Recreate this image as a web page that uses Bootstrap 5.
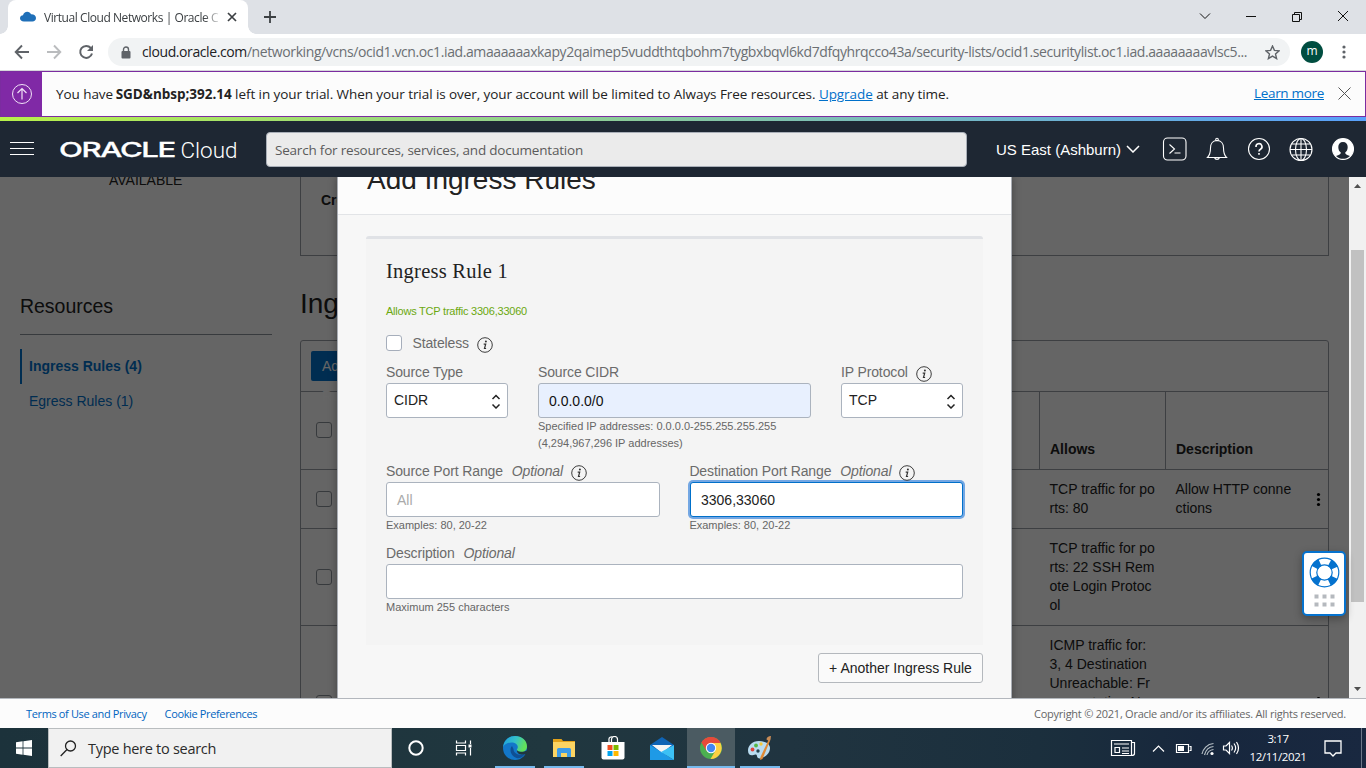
<!DOCTYPE html>
<html lang="en">
<head>
<meta charset="utf-8">
<meta name="viewport" content="width=device-width, initial-scale=1">
<title>Virtual Cloud Networks | Oracle Cloud</title>
<link href="https://cdn.jsdelivr.net/npm/bootstrap@5.3.0/dist/css/bootstrap.min.css" rel="stylesheet">
<style>
  html, body { height: 768px; overflow: hidden; }
  body { width: 1366px; font-family: "Liberation Sans", Arial, sans-serif; font-size: 14px; line-height: 19px; color: #222; background: #fff; }
  svg { display: block; flex: none; }
  .segoe { font-family: "Open Sans", "Noto Sans", sans-serif; }
  .fit { white-space: nowrap; display: inline-block; }

  /* browser chrome */
  .tabstrip { height: 34px; background: #dee1e6; padding-left: 8px; }
  .browser-tab { position: relative; width: 240px; height: 34px; background: #fff; border-radius: 8px 8px 0 0; padding-left: 12px; font-size: 12px; color: #3c4043; }
  .browser-tab::before, .browser-tab::after { content: ""; position: absolute; bottom: 0; width: 8px; height: 8px; }
  .browser-tab::before { left: -8px; background: radial-gradient(circle at 0 0, transparent 7.5px, #fff 8px); }
  .browser-tab::after { right: -8px; background: radial-gradient(circle at 100% 0, transparent 7.5px, #fff 8px); }
  .tab-title { width: 175px; overflow: hidden; letter-spacing: -.44px; -webkit-mask-image: linear-gradient(90deg, #000 160px, transparent 178px); mask-image: linear-gradient(90deg, #000 160px, transparent 178px); }
  .toolbar { height: 37px; border-bottom: 1px solid #d5d7da; padding-left: 14px; }
  .omnibox { width: 1182px; height: 28px; border-radius: 14px; background: #f1f3f4; padding: 0 10px 0 13px; color: #6b6f73; font-size: 14px; }
  .omnibox b { font-weight: 400; color: #202124; }
  .url { letter-spacing: -.401px; margin-left: 11px; line-height: 18px; padding-bottom: 1px; }
  .avatar { width: 22px; height: 22px; border-radius: 50%; background: #004d40; color: #fff; font-size: 12px; line-height: 20px; margin-left: 11px; }
  .dots { margin-left: 18px; }

  /* trial banner */
  .trial { height: 46px; border: 1px solid #7b2ca0; background: #fcfcfc; font-size: 13.5px; color: #222; }
  .trial-mark { width: 41px; background: #8029a6; }
  .trial a { color: #0070ca; }
  .trial-text { margin-left: 14px; letter-spacing: -.071px; }
  .trial-text b { letter-spacing: -.02px; margin-left: -.8px; }
  .learn { letter-spacing: -.31px; padding-bottom: 1px; }
  .close-x { margin: 0 14px 2px; }
  .rainbow { height: 4px; background: linear-gradient(90deg, #b7f04a, #58a0fb); }
  .cloud-nav { height: 56px; background: #1e2733; color: #fff; }
  .search-box { width: 701px; height: 35px; margin-left: 29px; padding-left: 8px; border: 1px solid #a9afb8; border-radius: 4px; background: #ebebeb; color: #5b5b5b; font-size: 13.5px; line-height: 34px; letter-spacing: -.204px; }
  .region { margin-left: 29px; width: 144px; font-size: 15px; }
  .tools { margin: 0 6px 0 auto; }

  /* page below the dialog */
  .stage { position: relative; height: 521px; overflow: hidden; }
  .page { width: 1349px; height: 521px; overflow: hidden; background: #fcfcfc; padding-left: 20px; }
  .side { width: 252px; }
  .status { height: 122px; padding-left: 89px; line-height: 6px; }
  .side-title { font-size: 19.5px; line-height: 14px; height: 36px; border-bottom: 1px solid #8b9198; letter-spacing: -.03px; }
  .side-link { height: 35px; padding-left: 7px; line-height: 35px; color: #0070ca; border-left: 2px solid transparent; }
  .side-link.current { margin-top: 14px; line-height: 34px; border-color: #0070ca; font-weight: 700; }
  .content-col { width: 1029px; margin-left: 28px; }
  .info-box { height: 79px; border: 1px solid #9a9fa6; border-top: 0; padding: 14px 0 0 20px; font-weight: 700; }
  .content-title { font-size: 28px; line-height: 34px; margin: 31px 0 19px; }
  .rules { border: 1px solid #9a9fa6; border-radius: 3px 3px 0 0; height: 420px; }
  .rules-bar { height: 50px; padding: 10px; }
  .rules-bar .btn { display: block; height: 30px; width: 130px; text-align: left; padding: 0 11px; font-size: 14px; line-height: 30px; border-radius: 2px; background: #0070ca; border: 0; color: #fff; }
  .rule-row { display: grid; grid-template-columns: 738px 126px 143px 20px; border-top: 1px solid #9a9fa6; }
  .rule-row > div { padding: 10px 9px 10px 10.5px; word-break: break-all; }
  .rule-row > div:first-child { padding-left: 15px; display: flex; align-items: center; }
  .rule-row > div:last-child { padding: 0 0 0 8px; display: flex; align-items: center; }
  .rule-head { height: 78px; font-weight: 700; }
  .rule-head > div:nth-child(1) { padding-bottom: 12px; }
  .rule-head > div:nth-child(2), .rule-head > div:nth-child(3) { border-left: 1px solid #9a9fa6; padding-top: 48px; padding-left: 10px; }
  .r1 { height: 59px; } .r2 { height: 97px; } .r3 { height: 155px; }
  .tick { width: 16px; height: 16px; border: 1px solid #8b9198; border-radius: 3px; display: block; flex: none; }
  .form-area .tick { background: #fff; border-color: #a6aebb; }
  .shade { position: absolute; top: 0; left: 0; width: 1349px; height: 521px; background: rgba(0,0,0,.6); }
  .dialog { width: 675px; height: 560px; background: #f7f7f7; border: solid #a9adb4; border-width: 0 1px; box-shadow: 0 0 8px rgba(0,0,0,.35); }
  .dialog-head { height: 38px; background: #fcfcfc; border-bottom: 1px solid #e2e4e7; padding-left: 29px; font-size: 28px; line-height: 6px; }
  .form-area { margin: 21px 28px 8px; height: 409px; background: #f4f4f4; border-top: 3px solid #e0e2e6; border-radius: 3px 3px 0 0; padding: 20px 20px 0; color: #6b6b6b; }
  .rule-name { font-family: "Liberation Serif", "Times New Roman", serif; font-size: 20.5px; line-height: 25px; color: #222; height: 42px; letter-spacing: .25px; }
  .allows { color: #6ba80f; font-size: 11px; line-height: 20px; height: 33px; letter-spacing: -.22px; }
  .lbl { height: 20px; line-height: 18px; display: flex; white-space: nowrap; letter-spacing: -.13px; }
  .lbl svg { margin: 3px 0 0 8px; }
  .lbl i { margin-left: 9px; }
  .stateless .tick { margin-top: 1px; }
  .stateless .fit { margin-left: 10.5px; }
  .cols-a { display: grid; grid-template-columns: 122px 273px 122px; column-gap: 30px; height: 99px; margin-top: 9px; }
  .cols-b { display: grid; grid-template-columns: 274px 274px; column-gap: 29.4px; height: 82px; }
  .box { height: 35px; border: 1px solid #abb3be; border-radius: 3px; background: #fff; color: #222; padding: 0 10px; line-height: 34px; font-size: 14px; }
  .box.pick { padding: 0 6px 0 7px; line-height: 33px; display: flex; justify-content: space-between; align-items: center; }
  .box.pick svg { margin-top: 2px; }
  .box.filled { background: #e8f0fe; color: #111; }
  .box.active { border-color: #0070ca; box-shadow: 0 0 0 2px #74a7e3; margin: 0 0 0 .6px; }
  .box.hint { color: #aaa; }
  .help { font-size: 11px; line-height: 17px; color: #666; }
  .add-btn { width: 165px; height: 30px; border: 1px solid #b4b8bd; border-radius: 3px; background: #fafafa; line-height: 28px; margin-right: 28px; padding: 0; font-size: 14px; color: #222; text-align: center; }
  .scrollrail { position: absolute; top: 0; right: 0; width: 17px; height: 521px; background: #f1f1f1; padding: 73px 2px 0; }
  .thumb { width: 13px; height: 352px; background: #c1c1c1; }
  .scrollrail svg { position: absolute; left: 0; }
  .lifebuoy { position: absolute; left: 1302px; top: 374px; width: 44px; height: 65px; border: 2px solid #0572ce; border-radius: 5px; background: #fff; box-shadow: 0 3px 8px rgba(0,0,0,.3); padding: 4px 0 0 4.5px; }

  .legal { height: 30px; border-top: 1px solid #b3b7bd; background: #fcfcfc; padding: 0 20px 0 26px; font-size: 11px; color: #666; letter-spacing: -.241px; }
  .legal a { color: #0064bf; text-decoration: none; letter-spacing: -.36px; }
  .cookies { margin-left: 18px; }

  /* taskbar */
  .taskbar { height: 40px; background: linear-gradient(90deg, #1c323b 0, #20373f 40%, #203440 58%, #1b2f3d 76%, #17273d 88%, #192840); color: #fff; }
  .start { width: 48px; padding-left: 16px; }
  .type-here { width: 344px; height: 40px; background: #f1f1f1; border: 1px solid #b9bdbf; color: #2b2b2b; font-size: 14.5px; letter-spacing: -.28px; padding-left: 11px; }
  .type-text { margin-left: 11px; }
  .app { position: relative; width: 48px; height: 40px; margin-right: 1px; display: flex; align-items: center; justify-content: center; }
  .app.open::after { content: ""; position: absolute; left: 4px; right: 4px; bottom: 0; height: 2px; background: #76b9ed; }
  .app.front { background: #4b5b62; }
  .app.front::after { left: 0; right: 0; }
  .app.view { margin-right: 2px; padding-right: 3px; }
  .clock { width: 76px; font-size: 11.5px; line-height: 18px; letter-spacing: -.4px; }
  .note { margin: 0 19px 0 8px; }
  .peek { width: 5px; height: 40px; border-left: 1px solid #6c7889; }
</style>
</head>
<body class="d-flex flex-column">

<div class="tabstrip d-flex align-items-center segoe">
  <div class="browser-tab d-flex align-items-center">
    <svg width="16" height="12" viewBox="0 0 16 12"><path d="M4 10.500C1.500 10.500 0 9.300 0 7.300 0 5.500 1.500 4.400 3 4.300 3.500 2 5.300.8 7.200.8c1.800 0 3.200 1 3.800 2.500 2.800-.2 5 1.400 5 3.700 0 2-1.500 3.500-3.600 3.500z" fill="#1f6fb8"/></svg>
    <div class="tab-title ms-2"><span class="fit">Virtual Cloud Networks | Oracle C</span></div>
    <svg width="10" height="10" viewBox="0 0 10 10" class="ms-2"><path d="M1 1l8 8M9 1L1 9" stroke="#3c4043" stroke-width="1.7"/></svg>
  </div>
  <svg width="12" height="12" viewBox="0 0 12 12" class="ms-3"><path d="M6 0v12M0 6h12" stroke="#3c4043" stroke-width="1.800"/></svg>
  <svg class="ms-auto" width="168" height="16" viewBox="0 0 168 16" fill="none" stroke="#111"><path d="M2 4.500l5 5 5-5M48 7.500h10M94.500 5.500h7v7h-7zM96.500 5v-1.500h7v7h-2M140 2l10 10M150 2l-10 10"/></svg>
</div>

<div class="toolbar d-flex align-items-center segoe">
  <svg width="86" height="20" viewBox="0 0 86 20" fill="none" stroke-width="1.900"><path d="M15 10H2M8 3.500L1.700 10 8 16.500" stroke="#5f6368"/><path d="M33 10h13M40 3.500l6.300 6.500-6.300 6.500" stroke="#babcbe"/><path d="M76.800 6A6 6 0 1 0 78 11.500" stroke="#5f6368" stroke-width="2"/><path d="M79 3v6h-6z" fill="#5f6368"/></svg>
  <div class="omnibox d-flex align-items-center ms-2">
    <svg width="10" height="13" viewBox="0 0 10 13"><path d="M2.500 6V3.500a2.500 2.500 0 0 1 5 0V6" fill="none" stroke="#5f6368" stroke-width="1.400"/><rect x=".5" y="5" width="9" height="7.500" rx="1" fill="#5f6368"/></svg>
    <span class="fit url"><b>cloud.oracle.com</b>/networking/vcns/ocid1.vcn.oc1.iad.amaaaaaaxkapy2qaimep5vuddthtqbohm7tygbxbqvl6kd7dfqyhrqcco43a/security-lists/ocid1.securitylist.oc1.iad.aaaaaaaavlsc5...</span>
    <svg class="ms-auto" width="15" height="15" viewBox="0 0 15 15"><path d="M7.500 1l1.900 4.400 4.700.4-3.600 3.100 1.100 4.700-4.100-2.500-4.100 2.500 1.100-4.700L.9 5.800l4.700-.4z" fill="none" stroke="#5f6368" stroke-width="1.400"/></svg>
  </div>
  <div class="avatar text-center">m</div>
  <svg class="dots" width="6" height="16" viewBox="0 0 6 16" fill="#5f6368"><circle cx="3" cy="3" r="1.600"/><circle cx="3" cy="8" r="1.600"/><circle cx="3" cy="13" r="1.600"/></svg>
</div>

<div class="trial d-flex align-items-center segoe">
  <div class="trial-mark h-100 d-flex align-items-center justify-content-center">
    <svg width="20" height="20" viewBox="0 0 20 20" fill="none" stroke="#f0e2f6"><circle cx="10" cy="10" r="9.500"/><path d="M10 15.500v-11M5.500 9L10 4.500 14.500 9" stroke-width="1.200"/></svg>
  </div>
  <span class="fit trial-text">You have <b>SGD&amp;nbsp;392.14</b> left in your trial. When your trial is over, your account will be limited to Always Free resources. <a href="#">Upgrade</a> at any time.</span>
  <a href="#" class="fit ms-auto learn">Learn more</a>
  <svg class="close-x" width="13" height="13" viewBox="0 0 13 13"><path d="M.5.500l12 12M12.500.500l-12 12" stroke="#555"/></svg>
</div>
<div class="rainbow"></div>

<div class="cloud-nav d-flex align-items-center">
  <svg width="237" height="56" viewBox="0 0 237 56"><path d="M10 21.500h24M10 27.500h24M10 33.500h24" stroke="#fff" stroke-width="1"/><text x="59" y="36" font-family="Inter" font-weight="500" font-size="20.500" letter-spacing="-.9" fill="#fff" stroke="#fff" stroke-width=".3" textLength="116" lengthAdjust="spacingAndGlyphs">ORACLE</text><text x="180.500" y="36.500" font-family="Roboto" font-weight="300" font-size="22.500" fill="#fff" textLength="57" lengthAdjust="spacingAndGlyphs">Cloud</text></svg>
  <div class="search-box segoe"><span class="fit">Search for resources, services, and documentation</span></div>
  <div class="region d-flex align-items-center justify-content-between"><span class="fit">US East (Ashburn)</span><svg width="14" height="8" viewBox="0 0 14 8"><path d="M1 1l6 6 6-6" fill="none" stroke="#fff" stroke-width="1.500"/></svg></div>
  <svg class="tools" width="200" height="28" viewBox="1160 135 200 28" fill="none" stroke="#fff" stroke-width="1.100">
    <rect x="1163.500" y="138" width="22.500" height="22" rx="4"/><path d="M1169.500 144.500l5 4.500-5 4.500M1174.500 153h6"/>
    <path d="M1207.500 157.500h19c-3-3-3-6-3-9.500 0-4.500-2.500-7.500-6.500-7.500s-6.500 3-6.500 7.500c0 3.500 0 6.500-3 9.500zM1214.500 157.500a2.600 2.600 0 0 0 5 0"/><circle cx="1217" cy="139.500" r="1.300"/>
    <circle cx="1259" cy="149" r="10.500"/><path d="M1256 147a3 3 0 1 1 4.500 2.200c-1 .6-1.500 1-1.500 2.300M1259 153v1.700" stroke-width="1.600"/>
    <circle cx="1301" cy="149.500" r="11"/><ellipse cx="1301" cy="149.500" rx="5.500" ry="11"/><path d="M1301 138.500v22M1290 149.500h22M1292 144h18M1292 155h18"/>
    <circle cx="1343" cy="149" r="10.500" fill="#fff"/><path d="M1343 142c-3 0-4.700 2-4.700 5 0 2.700 1 4.500 2.500 5.500 0 2-1.500 2.200-4.800 3.500 2 2 4.500 2.800 7 2.800s5-.8 7-2.800c-3.300-1.300-4.800-1.500-4.800-3.500 1.500-1 2.500-2.800 2.500-5.500 0-3-1.700-5-4.700-5z" fill="#1e2733" stroke="none"/>
  </svg>
</div>

<div class="stage">
  <div class="page d-flex">
    <div class="side">
      <div class="status">AVAILABLE</div>
      <div class="side-title">Resources</div>
      <div class="side-link current">Ingress Rules (4)</div>
      <div class="side-link">Egress Rules (1)</div>
    </div>
    <div class="content-col">
      <div class="info-box">Created</div>
      <div class="content-title">Ingress Rules</div>
      <div class="rules">
        <div class="rules-bar"><button class="btn">Add Ingress Rules</button></div>
        <div class="rule-row rule-head"><div><span class="tick"></span></div><div>Allows</div><div>Description</div><div></div></div>
        <div class="rule-row r1"><div><span class="tick"></span></div><div>TCP traffic for po<br>rts: 80</div><div>Allow HTTP conne<br>ctions</div><div><svg width="5" height="15" viewBox="0 0 5 15"><circle cx="2.500" cy="2.500" r="1.600"/><circle cx="2.500" cy="7.500" r="1.600"/><circle cx="2.500" cy="12.500" r="1.600"/></svg></div></div>
        <div class="rule-row r2"><div><span class="tick"></span></div><div><span class="fit">TCP traffic for po</span><br><span class="fit">rts: 22 SSH Rem</span><br><span class="fit">ote Login Protoc</span><br>ol</div><div></div><div></div></div>
        <div class="rule-row r3"><div><span class="tick"></span></div><div><span class="fit">ICMP traffic for:</span><br><span class="fit">3, 4 Destination</span><br><span class="fit">Unreachable: Fr</span><br>agmentation Ne</div><div></div><div><svg width="5" height="15" viewBox="0 0 5 15"><circle cx="2.500" cy="2.500" r="1.600"/><circle cx="2.500" cy="7.500" r="1.600"/><circle cx="2.500" cy="12.500" r="1.600"/></svg></div></div>
      </div>
    </div>
  </div>

  <div class="shade d-flex justify-content-center">
    <div class="dialog">
      <div class="dialog-head">Add Ingress Rules</div>
      <div class="form-area">
        <div class="rule-name">Ingress Rule 1</div>
        <div class="allows">Allows TCP traffic 3306,33060</div>
        <div class="lbl stateless"><span class="tick"></span><span class="fit">Stateless</span><svg width="16" height="16" viewBox="0 0 16 16"><use href="#info"/></svg></div>
        <div class="cols-a">
          <div><div class="lbl">Source Type</div><div class="box pick"><span>CIDR</span><svg width="10" height="15" viewBox="0 0 10 15"><use href="#updown"/></svg></div></div>
          <div><div class="lbl">Source CIDR</div><div class="box filled">0.0.0.0/0</div><div class="help">Specified IP addresses: 0.0.0.0-255.255.255.255<br>(4,294,967,296 IP addresses)</div></div>
          <div><div class="lbl"><span>IP Protocol</span><svg width="16" height="16" viewBox="0 0 16 16"><use href="#info"/></svg></div><div class="box pick"><span>TCP</span><svg width="10" height="15" viewBox="0 0 10 15"><use href="#updown"/></svg></div></div>
        </div>
        <div class="cols-b">
          <div><div class="lbl"><span>Source Port Range</span><i>Optional</i><svg width="16" height="16" viewBox="0 0 16 16"><use href="#info"/></svg></div><div class="box hint">All</div><div class="help">Examples: 80, 20-22</div></div>
          <div><div class="lbl"><span>Destination Port Range</span><i>Optional</i><svg width="16" height="16" viewBox="0 0 16 16"><use href="#info"/></svg></div><div class="box active">3306,33060</div><div class="help">Examples: 80, 20-22</div></div>
        </div>
        <div class="lbl"><span>Description</span><i>Optional</i></div><div class="box"></div><div class="help">Maximum 255 characters</div>
      </div>
      <button class="btn add-btn d-block ms-auto">+ Another Ingress Rule</button>
    </div>
  </div>

  <div class="scrollrail">
    <svg class="top-0" width="17" height="17" viewBox="0 0 17 17"><path d="M5 11l3.500-4 3.500 4z" fill="#505050"/></svg>
    <div class="thumb"></div>
    <svg class="bottom-0" width="17" height="17" viewBox="0 0 17 17"><path d="M5 6l3.500 4L12 6z" fill="#505050"/></svg>
  </div>
  <div class="lifebuoy">
    <svg width="31" height="51" viewBox="0 0 31 51"><circle cx="15.500" cy="15.500" r="11" fill="none" stroke="#0572ce" stroke-width="7.500" stroke-dasharray="7.280 10" stroke-dashoffset="-5"/><circle cx="15.500" cy="15.500" r="14.300" fill="none" stroke="#0572ce" stroke-width="1.200"/><circle cx="15.500" cy="15.500" r="7.700" fill="none" stroke="#0572ce" stroke-width="1.200"/><path d="M5.500 37.500h4v4h-4zm8 0h4v4h-4zm8 0h4v4h-4zm-16 8h4v4h-4zm8 0h4v4h-4zm8 0h4v4h-4z" fill="#b5b9be"/></svg>
  </div>
</div>

<div class="legal d-flex align-items-center segoe">
  <a href="#">Terms of Use and Privacy</a>
  <a href="#" class="cookies">Cookie Preferences</a>
  <span class="fit ms-auto">Copyright © 2021, Oracle and/or its affiliates. All rights reserved.</span>
</div>

<div class="taskbar d-flex align-items-center segoe">
  <div class="start"><svg width="16" height="16" viewBox="0 0 16 16" fill="#fff"><path d="M0 2.200l6.600-.9v6.300H0zM7.400 1.200L16 0v7.600H7.400zM0 8.400h6.600v6.300L0 13.800zM7.400 8.400H16V16l-8.600-1.200z"/></svg></div>
  <div class="type-here d-flex align-items-center">
    <svg width="17" height="17" viewBox="0 0 17 17" fill="none" stroke="#222" stroke-width="1.300"><circle cx="10.500" cy="6" r="5"/><path d="M7 9.500L.7 16"/></svg>
    <span class="fit type-text">Type here to search</span>
  </div>
  <div class="app"><svg width="16" height="16" viewBox="0 0 16 16"><circle cx="8" cy="8" r="6.700" fill="none" stroke="#fff" stroke-width="2"/></svg></div>
  <div class="app view"><svg width="17" height="16" viewBox="0 0 17 16" fill="none" stroke="#fff" stroke-width="1.200"><path d="M1.500.500v2.500h9V.500M1.500 5.500h9v5h-9zM1.500 15.500V13h9v2.500M15.500.500V4M15.500 8v7.500"/><path d="M13.500 4.500h3v3h-3z" fill="#fff" stroke="none"/></svg></div>
  <div class="app open"><svg width="24" height="24" viewBox="0 0 24 24"><defs><linearGradient id="eg" x1="0" x2="1" y1="0" y2=".3"><stop stop-color="#1b9de2"/><stop offset=".55" stop-color="#35c1c8"/><stop offset="1" stop-color="#62e05a"/></linearGradient></defs><circle cx="12" cy="12" r="12" fill="#1377c9"/><path d="M0 11C1 4 6 0 12 0c7 0 12 4.500 12 10.500 0 3.500-2.500 5.500-5.500 5.500-3 0-4.700-1-4.700-2 0-.8 1-1.200 1-3C14.800 8.500 12 6.500 8.500 6.500 5 6.500 1.500 8 0 11z" fill="url(#eg)"/><path d="M9 10c-3 3-1.500 10 4.500 12 3 .7 6-.5 8.500-4-5 2-11.500 0-11.500-5z" fill="#0f4f94"/><path d="M14 14.200c2 2 6 2.300 10 .3v3l-2.300.8c-4 1-8.200-.6-7.700-4.100z" fill="#20363f"/></svg></div>
  <div class="app open"><svg width="22" height="20" viewBox="0 0 22 20"><path d="M0 1h8.500l1.500 2H22v16H0z" fill="#e3a21a"/><path d="M0 4h22v15H0z" fill="#fcd462"/><path d="M4 19v-7.500q0-1.500 1.500-1.500h11q1.500 0 1.500 1.500V19h-4v-4H8v4z" fill="#3d9be8"/></svg></div>
  <div class="app"><svg width="24" height="24" viewBox="0 0 24 24"><path d="M8 6V4a2.500 2.500 0 0 1 4-2.500M10.500 6V3.500a3 3 0 0 1 6 0V6" fill="none" stroke="#fff" stroke-width="1.200"/><path d="M.5 6h23v15.500q0 2-2 2h-19q-2 0-2-2z" fill="#fff"/><path d="M6.500 9h5v5h-5z" fill="#f25022"/><path d="M12.500 9h5v5h-5z" fill="#7fba00"/><path d="M6.500 15h5v5h-5z" fill="#00a4ef"/><path d="M12.500 15h5v5h-5z" fill="#ffb900"/></svg></div>
  <div class="app"><svg width="24" height="23" viewBox="0 0 24 23"><path d="M0 8L12 0l12 8v10H0z" fill="#0f64b5"/><path d="M2 8h20l-10 8z" fill="#f5f5f5"/><path d="M0 8l24 15H0z" fill="#1e9ae6"/><path d="M24 8v15L11 15z" fill="#3cc1f5"/></svg></div>
  <div class="app open front"><svg width="22" height="22" viewBox="0 0 22 22"><circle cx="11" cy="11" r="11" fill="#4caf50"/><path d="M11 11L1.500 5.500A11 11 0 0 1 20.500 5.500z" fill="#e64a3b"/><path d="M1.500 5.500l5 8.500L11 6h9.500A11 11 0 0 0 1.500 5.500z" fill="#e64a3b"/><path d="M11 6h9.500A11 11 0 0 1 10.500 22l5-8.500z" fill="#fdd043"/><circle cx="11" cy="11" r="5.200" fill="#fff"/><circle cx="11" cy="11" r="4.200" fill="#4387f4"/></svg></div>
  <div class="app open"><svg width="24" height="24" viewBox="0 0 24 24"><path d="M11 5C4 5 0 10 0 14.500 0 19 3 20 5.500 19c2-1 3.500-.5 3.500 1 0 2 2 3 5 2 4-1.500 8-5 8-10 0-4-4.500-7-11-7z" fill="#b9dcf0"/><circle cx="4.500" cy="13.500" r="1.900" fill="#e0443c"/><circle cx="8" cy="9.500" r="1.900" fill="#55b847"/><circle cx="13" cy="8" r="1.700" fill="#f5c83a"/><circle cx="10" cy="15" r="1.700" fill="#24414e"/><path d="M20.500 4l1.500.7L14.500 23l-2.500 1 .5-3z" fill="#e08a35"/><path d="M18.500 3.500c0-2 2-3.500 4.500-3.500-.5 2 0 4-1.500 5.500z" fill="#c98c56"/></svg></div>
  <svg class="ms-auto" width="131" height="24" viewBox="1109 736 131 24" fill="none" stroke="#fff" stroke-width="1.200">
    <path d="M1111.500 740.500h20v15h-20zM1131.500 742.500h3v11q0 2-3 2M1114 744h15M1122 748h7M1122 751h7M1122 753.500h7M1115 747.500h4.500v5h-4.500z"/>
    <path d="M1153 751.500l5.500-5.500 5.500 5.500"/><path d="M1176.500 744.500h12v8h-12zM1189.500 746.500h1.500v4h-1.500"/><path d="M1178 746h6v5h-6z" fill="#fff" stroke="none"/>
    <path d="M1202 754c1-5 5-10 11.500-10.500M1204.500 755c1-4 4-8 9-8.500M1207 755c.5-2.500 3-5 6.500-5.500" stroke="#b5bec4"/><circle cx="1212" cy="753.500" r="1.600" fill="#fff" stroke="none"/>
    <path d="M1223.500 746h2.500l3.500-3.500v11l-3.500-3.500h-2.500zM1231.500 745.500q1.800 2.500 0 5M1234 743.500q3.300 4.500 0 9M1236.500 742q4 6 0 12"/>
  </svg>
  <div class="clock text-center">3:17<br>12/11/2021</div>
  <svg class="note" width="18" height="17" viewBox="0 0 18 17"><path d="M1 1h16v12h-5l-3 3-3-3H1z" fill="none" stroke="#fff" stroke-width="1.300"/></svg>
  <div class="peek"></div>
</div>

<svg width="0" height="0" class="position-absolute"><defs>
  <g id="info"><circle cx="8" cy="8" r="7.300" fill="none" stroke="#3c3c3c"/><circle cx="8.900" cy="4.500" r="1" fill="#333"/><path d="M6.700 7.200h2L7.500 11.500h1.600" fill="none" stroke="#333" stroke-width="1.200"/></g>
  <g id="updown" fill="none" stroke="#222" stroke-width="1.500"><path d="M1.500 5L5 1.500 8.500 5M1.500 10.500L5 14l3.500-3.500"/></g>
</defs></svg>
<script src="https://cdn.jsdelivr.net/npm/bootstrap@5.3.0/dist/js/bootstrap.bundle.min.js"></script>
</body>
</html>
